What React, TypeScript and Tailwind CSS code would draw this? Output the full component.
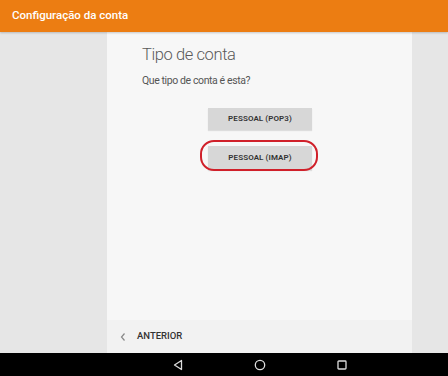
import React from 'react'

const font = { fontFamily: 'Roboto, "Noto Sans", sans-serif' }

const App = () => {
  return (
    <div className="w-[448px] h-[376px] flex flex-col bg-[#e6e6e6] overflow-hidden" style={font}>
      {/* top bar */}
      <div className="h-[32px] bg-[#ec7d12] flex items-center pl-[12px] shadow-[0_1px_2px_rgba(0,0,0,0.2)] z-10">
        <span className="text-white text-[11.5px] font-medium">Configuração da conta</span>
      </div>

      <div className="flex-1 flex">
        <div className="w-[107px]" />
        <div className="w-[305px] flex flex-col bg-[#f7f7f7]">
          <div className="flex-1 flex flex-col pl-[35px] pt-[11px]">
            <h1 className="text-[16.5px] font-light text-[#5a5a5a] leading-[24px] tracking-[-0.4px]">Tipo de conta</h1>
            <p className="text-[10.5px] text-[#555] mt-[6px] leading-[16px] tracking-[-0.4px]">Que tipo de conta é esta?</p>

            <div className="flex flex-col items-start pl-[66px] mt-[19px]">
              <button className="w-[104px] h-[22px] bg-[#d7d7d7] text-[8px] font-semibold text-[#333] tracking-[0.1px] shadow-[0_1px_1px_rgba(0,0,0,0.1)]">
                PESSOAL (POP3)
              </button>
              <div className="relative mt-[13px]">
                <button className="w-[104px] h-[24px] bg-[#d7d7d7] text-[8px] font-semibold text-[#333] tracking-[0.1px] shadow-[0_1px_1px_rgba(0,0,0,0.1)]">
                  PESSOAL (IMAP)
                </button>
                <div className="absolute left-[-8px] top-[-3px] w-[118px] h-[31px] border-2 border-[#d0202a] rounded-[14px]" />
              </div>
            </div>
          </div>

          <div className="h-[33px] bg-[#f2f2f2] flex items-center pl-[12px]">
            <svg width="8" height="10" viewBox="0 0 8 10" className="mr-[10px]">
              <path d="M5.5 1.5 L2.5 5 L5.5 8.5" fill="none" stroke="#888" strokeWidth="1.2" />
            </svg>
            <span className="text-[9.5px] font-medium text-[#333]">ANTERIOR</span>
          </div>
        </div>
        <div className="flex-1" />
      </div>

      {/* nav bar */}
      <div className="h-[23px] bg-black flex items-center pl-[172px]">
        <svg width="12" height="12" viewBox="0 0 12 12" className="mr-[70px]">
          <path d="M9.5 1.5 L2.5 6 L9.5 10.5 Z" fill="none" stroke="#ddd" strokeWidth="1.3" strokeLinejoin="round" />
        </svg>
        <svg width="12" height="12" viewBox="0 0 12 12" className="mr-[70px]">
          <circle cx="6" cy="6" r="4.7" fill="none" stroke="#ddd" strokeWidth="1.3" />
        </svg>
        <svg width="12" height="12" viewBox="0 0 12 12">
          <rect x="2" y="2" width="8" height="8" rx="0.8" fill="none" stroke="#ddd" strokeWidth="1.3" />
        </svg>
      </div>
    </div>
  )
}

export default App
